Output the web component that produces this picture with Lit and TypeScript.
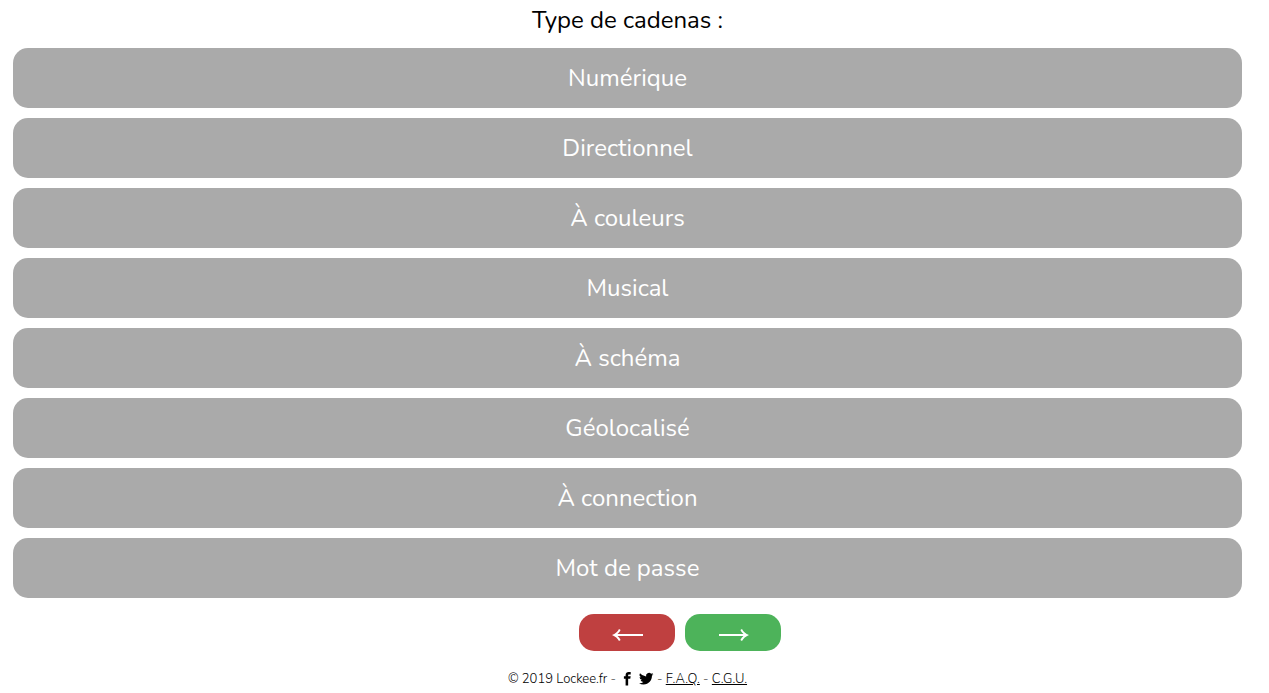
import { LitElement, html, css } from "lit";
import { customElement, state } from "lit/decorators.js";

const LOCK_TYPES = [
  "Numérique",
  "Directionnel",
  "À couleurs",
  "Musical",
  "À schéma",
  "Géolocalisé",
  "À connection",
  "Mot de passe",
];

@customElement("app-root")
export class AppRoot extends LitElement {
  @state() private selected = "";

  static styles = css`
    :host {
      display: block;
      box-sizing: border-box;
      padding: 0 27px 0 13px;
      background: #fff;
      color: #000;
      font-family: Nunito, Lato, "Open Sans", sans-serif;
      text-align: center;
    }
    * {
      box-sizing: border-box;
    }
    .title {
      margin: 0;
      padding: 4px 0 12px;
      font-size: 24px;
      line-height: 32px;
      font-weight: 400;
    }
    .types {
      display: flex;
      flex-direction: column;
      gap: 10px;
    }
    button {
      border: 0;
      margin: 0;
      font-family: inherit;
      color: #fff;
      cursor: pointer;
    }
    .type {
      width: 100%;
      padding: 14px 20px;
      border-radius: 15px;
      background: #aaa;
      font-size: 24px;
      line-height: 32px;
      font-weight: 400;
    }
    .nav {
      display: flex;
      justify-content: center;
      gap: 10px;
      padding: 16px 0 0 105px;
    }
    .step {
      display: flex;
      align-items: center;
      justify-content: center;
      width: 96px;
      height: 37px;
      padding: 4px 0 0;
      border-radius: 15px;
    }
    .step svg {
      display: block;
      width: 32px;
      height: 15px;
      fill: #fff;
    }
    .back {
      background: #bf4040;
    }
    .next {
      background: #4db35a;
    }
    footer {
      display: flex;
      justify-content: center;
      align-items: center;
      gap: 3px;
      padding-top: 19px;
      font-size: 13px;
      line-height: 18px;
      font-weight: 300;
    }
    footer a {
      color: #000;
    }
    .social {
      display: flex;
      width: 16px;
      height: 16px;
    }
    .social svg {
      width: 16px;
      height: 16px;
      fill: #000;
    }
  `;

  render() {
    return html`
      <main>
        <h1 class="title">Type de cadenas :</h1>
        <div class="types">
          ${LOCK_TYPES.map(
            (name) => html`<button
              class="type"
              type="button"
              aria-pressed=${this.selected === name ? "true" : "false"}
              @click=${() => (this.selected = name)}
            >${name}</button>`
          )}
        </div>
        <div class="nav">
          <button class="step back" type="button" aria-label="Retour">
            <svg viewBox="0 0 32 15" aria-hidden="true">
              <path d="M1 8Q6 6 8 2L9.600 3Q8.500 5.500 6.500 7H32V9H6.500Q8.500 10.500 9.600 13L8 14Q6 10 1 8Z" />
            </svg>
          </button>
          <button class="step next" type="button" aria-label="Suivant">
            <svg viewBox="0 0 32 15" aria-hidden="true">
              <path d="M32 8Q27 6 25 2L23.400 3Q24.500 5.500 26.500 7H2V9H26.500Q24.500 10.500 23.400 13L25 14Q27 10 32 8Z" />
            </svg>
          </button>
        </div>
      </main>
      <footer>
        <span>© 2019 Lockee.fr -</span>
        <a class="social" href="#facebook" aria-label="Facebook">
          <svg viewBox="0 0 16 16" aria-hidden="true">
            <path d="M9.500 3H12V0H9.500C7.500 0 6 1.500 6 3.500V5H4V8H6V16H9V8H11.500L12 5H9V3.500Q9 3 9.500 3Z" transform="translate(1.500 1) scale(.85)" />
          </svg>
        </a>
        <a class="social" href="#twitter" aria-label="Twitter">
          <svg viewBox="0 0 16 16" aria-hidden="true">
            <path d="M16 3.538a6.461 6.461 0 0 1-1.884.516 3.301 3.301 0 0 0 1.444-1.816 6.607 6.607 0 0 1-2.084.797 3.282 3.282 0 0 0-5.594 2.994A9.329 9.329 0 0 1 1.116 2.600a3.284 3.284 0 0 0 1.015 4.381A3.301 3.301 0 0 1 .643 6.575v.041a3.283 3.283 0 0 0 2.632 3.218 3.305 3.305 0 0 1-1.485.056 3.285 3.285 0 0 0 3.066 2.281A6.586 6.586 0 0 1 0 13.529a9.290 9.290 0 0 0 5.032 1.475c6.038 0 9.341-5.003 9.341-9.341 0-.144-.003-.284-.009-.425A6.632 6.632 0 0 0 16 3.538Z" transform="translate(1 0) scale(.9)" />
          </svg>
        </a>
        <span>- <a href="#faq">F.A.Q.</a> - <a href="#cgu">C.G.U.</a></span>
      </footer>
    `;
  }
}
